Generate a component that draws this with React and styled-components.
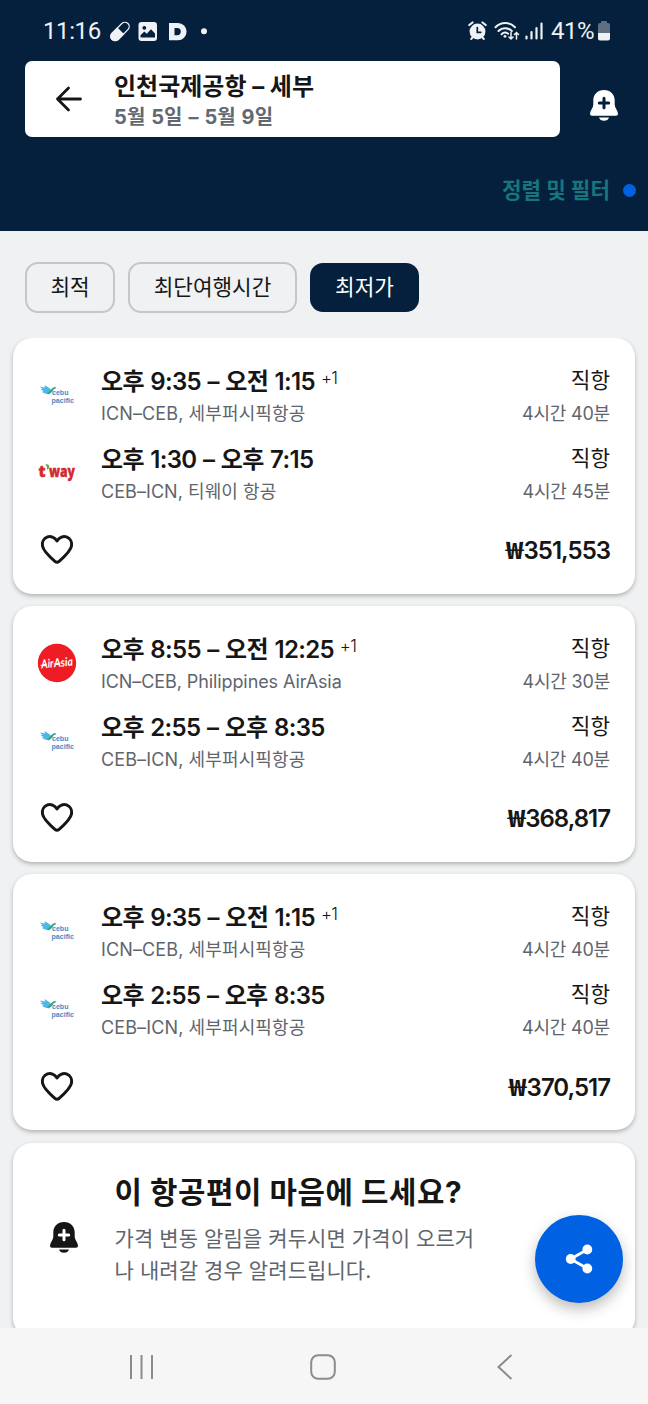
import styled, { createGlobalStyle } from 'styled-components';

const GlobalStyle = createGlobalStyle`
  * {
    box-sizing: border-box;
  }
  body {
    margin: 0;
    background: #eff1f2;
  }
`;

const flights = [
  {
    id: 1,
    price: "351,553",
    legs: [
      { airline: "cebu", time: "오후 9:35 – 오전 1:15", nextDay: true, route: "ICN–CEB, 세부퍼시픽항공", spacing: 0.12, duration: "4시간 40분" },
      { airline: "tway", time: "오후 1:30 – 오후 7:15", route: "CEB–ICN, 티웨이 항공", spacing: 0.06, duration: "4시간 45분" },
    ],
  },
  {
    id: 2,
    price: "368,817",
    legs: [
      { airline: "airasia", time: "오후 8:55 – 오전 12:25", nextDay: true, route: "ICN–CEB, Philippines AirAsia", spacing: -0.09, duration: "4시간 30분" },
      { airline: "cebu", time: "오후 2:55 – 오후 8:35", route: "CEB–ICN, 세부퍼시픽항공", spacing: 0.12, duration: "4시간 40분" },
    ],
  },
  {
    id: 3,
    price: "370,517",
    legs: [
      { airline: "cebu", time: "오후 9:35 – 오전 1:15", nextDay: true, route: "ICN–CEB, 세부퍼시픽항공", spacing: 0.12, duration: "4시간 40분" },
      { airline: "cebu", time: "오후 2:55 – 오후 8:35", route: "CEB–ICN, 세부퍼시픽항공", spacing: 0.12, duration: "4시간 40분" },
    ],
  },
];

const sortBtns = [
  { name: "최적", type: "best", width: 90 },
  { name: "최단여행시간", type: "fastest", width: 169 },
  { name: "최저가", type: "cheapest", width: 109 },
];

function StatusIconsLeft() {
  return (
    <svg width="98" height="22" viewBox="110 20 98 22">
      <g transform="rotate(-45 120 31.5)">
        <rect x="108.8" y="27.2" width="22.4" height="8.6" rx="4.3" fill="none" stroke="#eef1f6" strokeWidth="1.3" />
        <path d="M121 26.500h-7.800a5 5 0 0 0 0 10h7.800z" fill="#eef1f6" />
      </g>
      <path fillRule="evenodd" fill="#eef1f6" d="M141.500 22h12.500a3 3 0 0 1 3 3v13a3 3 0 0 1-3 3h-12.500a3 3 0 0 1-3-3v-13a3 3 0 0 1 3-3zM144.300 26a1.900 1.900 0 1 0 .01 0zM140.500 37.500h14.500v-4l-4-4.300-4.200 4.600-2.500-2.200-3.800 3.600z" />
      <path fillRule="evenodd" fill="#eef1f6" d="M169 23h9a8.600 8.600 0 0 1 0 17.200h-9zM174.500 28v7.200h2.700a3.600 3.600 0 0 0 0-7.200z" />
      <circle cx="204" cy="31.300" r="3" fill="#eef1f6" />
    </svg>
  );
}

function StatusIconsRight() {
  return (
    <svg width="76" height="22" viewBox="468 20 76 22">
      <g stroke="#eef1f6" fill="none" strokeLinecap="round">
        <circle cx="477.500" cy="31.500" r="7.900" fill="#eef1f6" stroke="none" />
        <path d="M469.300 25l3.200-2.500M485.700 25l-3.200-2.500M471.300 38.900l1.500-1.800M483.700 38.900l-1.500-1.800" strokeWidth="2.200" />
        <path d="M477.300 27.500v4.800h3.500" stroke="#05203c" strokeWidth="1.700" />
        <path d="M495.500 27.300a13.300 13.300 0 0 1 19.500 0M498.500 31a9.300 9.300 0 0 1 13.300 0M501.600 34.300a5 5 0 0 1 6.500-.6" strokeWidth="2" />
        <circle cx="505" cy="36.300" r="1.400" fill="#eef1f6" stroke="none" />
        <path d="M511 32.500v6.500m-2-2l2 2 2-2M516.500 39v-6.500m-2 2l2-2 2 2" strokeWidth="1.500" />
        <path d="M526.500 36.500v2M531.500 32v6.500M536.500 28v10.500M541.500 23.500v15" strokeWidth="2.200" />
      </g>
    </svg>
  );
}

function BatteryIcon() {
  return (
    <svg width="14" height="22" viewBox="0 0 14 22">
      <path d="M4 3V2a1 1 0 0 1 1-1h4a1 1 0 0 1 1 1v1h1a2 2 0 0 1 2 2v8H1V5a2 2 0 0 1 2-2z" fill="#5f6e80" />
      <path d="M1 13h12v5.500a2 2 0 0 1-2 2H3a2 2 0 0 1-2-2z" fill="#eef1f6" />
    </svg>
  );
}

function BellPlus({ color, plus }) {
  return (
    <svg width="28" height="31" viewBox="0 0 28 31">
      <path d="M14 0C7.500 0 3.300 4.500 3.300 10.500v4.300c0 3-3.300 6-3.300 9 0 1.200.8 2 2 2h24c1.200 0 2-.8 2-2 0-3-3.300-6-3.300-9v-4.300C24.700 4.500 20.500 0 14 0zM9 27.500h10c-.5 2-2.500 3.300-5 3.300s-4.500-1.300-5-3.300z" fill={color} />
      <path d="M14 8.300v9.400M9.300 13h9.400" stroke={plus} strokeWidth="3" strokeLinecap="round" />
    </svg>
  );
}

function HeartIcon() {
  return (
    <svg width="34" height="32" viewBox="0 0 34 32">
      <path d="M17 7C14.700 3 10.500 1.800 7.500 2.900 3.500 4.400 1.800 8.300 2.500 12c.9 5 8 11.500 12.400 15.300 1.500 1.300 2.700 1.300 4.200 0C23.500 23.500 30.600 17 31.500 12c.7-3.700-1-7.600-5-9.100-3-1.100-7.200.1-9.500 4.100z" fill="none" stroke="#161616" strokeWidth="3" strokeLinejoin="round" />
    </svg>
  );
}

function AirlineLogo({ airline }) {
  if (airline === "airasia") {
    return (
      <Logo width="40" height="40" viewBox="0 0 40 40">
        <circle cx="20" cy="20" r="19.200" fill="#ee1c25" />
        <g transform="rotate(-5 20 20)" fontFamily="Lato, sans-serif" fontStyle="italic" fontWeight="700" fontSize="12" fill="#fff">
          <text x="4" y="24" textLength="12.500" lengthAdjust="spacingAndGlyphs">Air</text>
          <text x="17" y="24" textLength="19" lengthAdjust="spacingAndGlyphs">Asia</text>
        </g>
        <path d="M4 22.500l5-1.300M17 21l6-1" stroke="#fff" strokeWidth="1.200" strokeLinecap="round" />
      </Logo>
    );
  }
  if (airline === "tway") {
    return (
      <Logo width="40" height="40" viewBox="0 0 40 40">
        <g fontFamily="'Open Sans', sans-serif" fontWeight="800" fontSize="15" fill="#d32a30" stroke="#d32a30" strokeWidth="0.400">
          <text x="1.500" y="24" textLength="7" lengthAdjust="spacingAndGlyphs">t</text>
          <text x="12" y="24" textLength="26" lengthAdjust="spacingAndGlyphs">way</text>
        </g>
        <path d="M8.300 11.500c2-.6 3.800 0 3.800 1.900 0 1.500-.8 2.900-2.200 3.400.5-1.900.2-3.800-1.600-5.300z" fill="#5da53c" />
      </Logo>
    );
  }
  return (
    <Logo width="40" height="40" viewBox="0 0 40 40">
      <path d="M2.500 11.500l5.500 1-.5-2.500 5.500 3.500 1.500 3-2.500 3-4-1-3-1.500 1.500-1-3-1.500 2-.8z" fill="#4db9e8" />
      <path d="M9.500 18.300c3.500-1.300 4.500-5.800 9-6.300l.5 1.300-2.500 1.200c-1.500 3.500-4 5-7 3.800z" fill="#36a384" />
      <g fontFamily="'Liberation Sans', sans-serif" fontWeight="700" fontSize="7.500" fill="#3f8bca">
        <text x="15" y="20" textLength="16.500" lengthAdjust="spacingAndGlyphs">cebu</text>
        <text x="14.500" y="28" textLength="22.500" lengthAdjust="spacingAndGlyphs">pacific</text>
      </g>
    </Logo>
  );
}

function FlightCard({ flight }) {
  return (
    <Card>
      {flight.legs.map((leg, i) => (
        <Leg key={i}>
          <LogoBox>
            <AirlineLogo airline={leg.airline} />
          </LogoBox>
          <LegInfo>
            <Time>
              {leg.time}
              {leg.nextDay && <NextDay>+1</NextDay>}
            </Time>
            <Route $spacing={leg.spacing}>{leg.route}</Route>
          </LegInfo>
          <LegSide>
            <Stops>직항</Stops>
            <Duration>{leg.duration}</Duration>
          </LegSide>
        </Leg>
      ))}
      <CardFooter>
        <IconButton aria-label="저장">
          <HeartIcon />
        </IconButton>
        <Price>
          <Won>₩</Won>
          {flight.price}
        </Price>
      </CardFooter>
    </Card>
  );
}

function App() {
  const selectedBtn = "cheapest";

  return (
    <>
      <GlobalStyle />
      <Screen>
        <Header>
          <StatusBar>
            <Clock>11:16</Clock>
            <StatusIconsLeft />
            <StatusRight>
              <StatusIconsRight />
              <Percent>41%</Percent>
              <BatteryIcon />
            </StatusRight>
          </StatusBar>
          <SearchRow>
            <SearchBox>
              <svg width="28" height="26" viewBox="0 0 28 26">
                <path d="M25.500 13H2.500M13.500 2L2.500 13l11 11" fill="none" stroke="#161616" strokeWidth="2.800" strokeLinecap="round" strokeLinejoin="round" />
              </svg>
              <SearchText>
                <Place>인천국제공항 – 세부</Place>
                <Dates>5월 5일 – 5월 9일</Dates>
              </SearchText>
            </SearchBox>
            <BellPlus color="#fff" plus="#05203c" />
          </SearchRow>
          <FilterRow>
            정렬 및 필터
            <Dot />
          </FilterRow>
        </Header>
        <SortContainer>
          {sortBtns.map((btn) => (
            <SortButton key={btn.type} $width={btn.width} $selected={selectedBtn === btn.type}>
              {btn.name}
            </SortButton>
          ))}
        </SortContainer>
        <CardList>
          {flights.map((flight) => (
            <FlightCard key={flight.id} flight={flight} />
          ))}
          <AlertCard>
            <BellPlus color="#161616" plus="#fff" />
            <div>
              <AlertTitle>이 항공편이 마음에 드세요?</AlertTitle>
              <AlertText>
                가격 변동 알림을 켜두시면 가격이 오르거<br />나 내려갈 경우 알려드립니다.
              </AlertText>
            </div>
          </AlertCard>
        </CardList>
        <ShareButton aria-label="공유">
          <svg width="28" height="30" viewBox="0 0 28 30">
            <path d="M22.500 5.500L5.500 15l17 9.500" fill="none" stroke="#fff" strokeWidth="2.800" />
            <circle cx="22.300" cy="5.500" r="4.900" fill="#fff" />
            <circle cx="5.700" cy="15" r="4.900" fill="#fff" />
            <circle cx="22.300" cy="24.500" r="4.900" fill="#fff" />
          </svg>
        </ShareButton>
        <NavBar>
          <svg width="26" height="26" viewBox="0 0 26 26">
            <path d="M2 1v24M12.500 1v24M23 1v24" stroke="#8c8c8c" strokeWidth="2" />
          </svg>
          <svg width="26" height="26" viewBox="0 0 26 26">
            <rect x="1.200" y="1.200" width="23.600" height="23.600" rx="7" fill="none" stroke="#8c8c8c" strokeWidth="2" />
          </svg>
          <svg width="26" height="26" viewBox="0 0 26 26">
            <path d="M21.500 1L8.500 13l13 12" fill="none" stroke="#8c8c8c" strokeWidth="2" />
          </svg>
        </NavBar>
      </Screen>
    </>
  );
}

export default App;

const Screen = styled.div`
  position: relative;
  display: flex;
  flex-direction: column;
  width: 648px;
  height: 1404px;
  overflow: hidden;
  background: #eff1f2;
  color: #161616;
  font-family: Inter, "Noto Sans CJK KR", sans-serif;
`;

const Header = styled.header`
  flex: none;
  height: 231px;
  background: #05203c;
`;

const StatusBar = styled.div`
  display: flex;
  align-items: center;
  height: 61px;
  padding: 1px 37px 0 43px;
  color: #eef1f6;
  font-family: Roboto, sans-serif;
  font-size: 24px;
`;

const Clock = styled.span`
  width: 67px;
  letter-spacing: -0.4px;
`;

const StatusRight = styled.div`
  display: flex;
  align-items: center;
  margin-left: auto;
`;

const Percent = styled.span`
  margin-left: 7px;
  width: 46px;
  letter-spacing: -0.5px;
`;

const SearchRow = styled.div`
  display: flex;
  align-items: center;
  gap: 30px;
  padding-left: 25px;

  > svg {
    margin-top: 12px;
  }
`;

const SearchBox = styled.div`
  display: flex;
  align-items: center;
  gap: 31px;
  width: 535px;
  height: 76px;
  padding-left: 30px;
  border-radius: 7px;
  background: #fff;
`;

const SearchText = styled.div`
  padding-top: 5px;
`;

const Place = styled.div`
  font-size: 24px;
  font-weight: 700;
  line-height: 30px;
`;

const Dates = styled.div`
  color: #626971;
  font-size: 20px;
  font-weight: 700;
  line-height: 30px;
  letter-spacing: 0.1px;
  word-spacing: 1px;
`;

const FilterRow = styled.div`
  display: flex;
  align-items: center;
  justify-content: flex-end;
  gap: 13px;
  height: 106px;
  padding-right: 12px;
  color: #17757c;
  font-size: 21.300px;
  font-weight: 700;
  line-height: 30px;
`;

const Dot = styled.span`
  width: 13px;
  height: 13px;
  border-radius: 50%;
  background: #0062e3;
`;

const SortContainer = styled.div`
  display: flex;
  flex: none;
  align-items: center;
  gap: 13px;
  height: 107px;
  padding: 5px 0 0 25px;
`;

const SortButton = styled.button`
  width: ${({ $width }) => $width}px;
  height: ${({ $selected }) => ($selected ? "49px" : "51px")};
  padding: 0 0 1px;
  border: ${({ $selected }) => ($selected ? "none" : "2px solid #c1c7cb")};
  border-radius: 13px;
  background: ${({ $selected }) => ($selected ? "#05203c" : "transparent")};
  color: ${({ $selected }) => ($selected ? "#fff" : "#161616")};
  font-family: inherit;
  font-size: 21.300px;
  line-height: 30px;
`;

const CardList = styled.main`
  display: flex;
  flex: 1;
  flex-direction: column;
  gap: 12.200px;
  min-height: 0;
  padding: 0 13px;
  overflow: hidden;
`;

const Card = styled.section`
  flex: none;
  height: 256px;
  padding: 27px 25px 0;
  border-radius: 19px;
  background: #fff;
  box-shadow: 0 2px 4px rgba(37, 32, 31, 0.3);
`;

const Leg = styled.div`
  display: flex;
  height: 64px;
  margin-bottom: 13.600px;
`;

const LogoBox = styled.div`
  display: flex;
  flex: none;
  align-items: center;
  width: 64px;
  height: 60px;
  margin-left: -1px;
`;

const Logo = styled.svg`
  overflow: visible;
`;

const LegInfo = styled.div`
  flex: 1;
  padding-top: 1px;
  white-space: nowrap;
`;

const Time = styled.div`
  height: 32px;
  font-size: 24px;
  font-weight: 600;
  line-height: 32px;
  letter-spacing: -0.670px;
  word-spacing: 1.100px;
`;

const NextDay = styled.sup`
  margin-left: 6px;
  font-size: 17px;
  font-weight: 300;
  line-height: 0;
  vertical-align: 6px;
`;

const Route = styled.div`
  color: #5f656d;
  font-size: 18px;
  line-height: 31px;
  letter-spacing: ${({ $spacing }) => $spacing}px;
`;

const LegSide = styled.div`
  text-align: right;
`;

const Stops = styled.div`
  height: 33px;
  font-size: 21.300px;
  line-height: 31px;
`;

const Duration = styled.div`
  color: #5f656d;
  font-size: 18px;
  line-height: 31px;
  letter-spacing: -0.2px;
`;

const CardFooter = styled.div`
  display: flex;
  align-items: center;
  justify-content: space-between;
  height: 60px;
`;

const IconButton = styled.button`
  display: flex;
  padding: 0;
  margin-left: 2px;
  border: none;
  background: none;
`;

const Price = styled.span`
  padding-top: 2px;
  font-size: 24px;
  font-weight: 600;
  line-height: 32px;
  letter-spacing: -1px;
`;

const Won = styled.span`
  display: inline-block;
  margin-right: 1px;
  font-family: "Noto Sans CJK KR", sans-serif;
  font-size: 24px;
  font-weight: 700;
  line-height: 1;
  transform: scaleX(1.25);
  transform-origin: right;
`;

const AlertCard = styled(Card)`
  display: flex;
  align-items: flex-start;
  gap: 37px;
  height: 194px;
  padding: 31px 37px 0 36.500px;

  > svg {
    margin-top: 48px;
  }
`;

const AlertTitle = styled.h2`
  margin: 0 0 13px;
  font-size: 29.800px;
  font-weight: 700;
  line-height: 36px;
  letter-spacing: 0.550px;
  white-space: nowrap;
`;

const AlertText = styled.p`
  margin: 0;
  color: #5f656d;
  font-size: 21px;
  line-height: 32px;
  letter-spacing: 0.080px;
  white-space: nowrap;
`;

const ShareButton = styled.button`
  position: absolute;
  right: 25px;
  bottom: 101px;
  display: flex;
  align-items: center;
  justify-content: center;
  width: 88px;
  height: 88px;
  padding: 0;
  border: none;
  border-radius: 50%;
  background: #0062e3;
  box-shadow: 0 6px 14px rgba(37, 32, 31, 0.3);
`;

const NavBar = styled.nav`
  display: flex;
  flex: none;
  align-items: center;
  justify-content: space-between;
  height: 76px;
  padding: 2px 132px 0 129px;
  background: #f6f6f6;
`;
